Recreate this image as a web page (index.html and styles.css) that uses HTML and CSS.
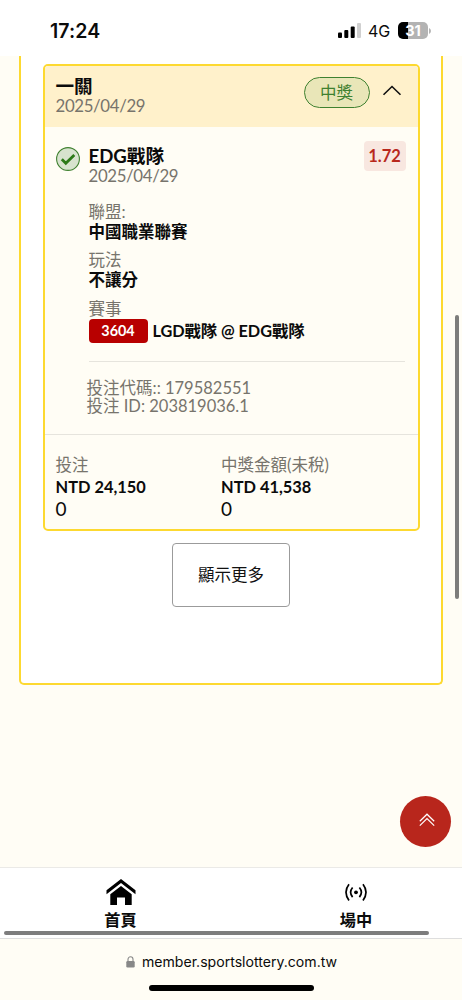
FILE: index.html
```html
<!DOCTYPE html>
<html lang="zh-Hant">
<head>
<meta charset="utf-8">
<title>投注紀錄</title>
<link rel="stylesheet" href="styles.css">
</head>
<body>
<div class="screen">
  <header class="status">
    <span class="clock">17:24</span>
    <div class="status-right">
      <svg class="signal" width="24" height="16" viewBox="0 0 24 16"><rect x="1" y="9.5" width="4" height="5.5" rx="1"/><rect x="7.3" y="7" width="4" height="8" rx="1"/><rect x="13.7" y="3.5" width="4" height="11.5" rx="1"/><rect x="20" y="0" width="4" height="15" rx="1" fill="#d0d0d0"/></svg>
      <span class="network">4G</span>
      <div class="battery"><span>31</span></div>
      <svg class="battery-cap" width="2" height="6" viewBox="0 0 2 6"><path d="M0 0Q2 1 2 3T0 6Z" fill="#b3b3b3"/></svg>
    </div>
  </header>
  <main class="main">
    <section class="panel">
      <article class="card">
        <div class="card-head">
          <div>
            <div class="line strong">一關</div>
            <div class="line date">2025/04/29</div>
          </div>
          <div class="head-right">
            <span class="won">中獎</span>
            <svg class="chevron" width="20" height="12" viewBox="0 0 20 12"><path d="M1.5 10.8L10 2.500l8.5 8.3" fill="none" stroke="#111" stroke-width="1.6"/></svg>
          </div>
        </div>
        <div class="card-body">
          <svg class="check" width="24" height="24" viewBox="0 0 24 24"><circle cx="12" cy="12" r="11.4" fill="#d7e3ce" stroke="#3f8130" stroke-width="1.1"/><path d="M5.8 12.3l4 4L18.3 8" fill="none" stroke="#2c7a18" stroke-width="2.8"/></svg>
          <div class="details">
            <div class="team-row">
              <div>
                <div class="line strong team">EDG戰隊</div>
                <div class="line date">2025/04/29</div>
              </div>
              <span class="odds">1.72</span>
            </div>
            <div class="field league"><div class="label">聯盟:</div><div class="value">中國職業聯賽</div></div>
            <div class="field play"><div class="label">玩法</div><div class="value">不讓分</div></div>
            <div class="field"><div class="label">賽事</div></div>
            <div class="match"><span class="code">3604</span><span class="value versus">LGD戰隊 @ EDG戰隊</span></div>
            <div class="ids"><div>投注代碼:: 179582551</div><div>投注 ID: 203819036.1</div></div>
          </div>
        </div>
        <div class="card-foot">
          <div><div class="foot-label">投注</div><div class="amount">NTD 24,150</div><div class="zero">0</div></div>
          <div><div class="foot-label">中獎金額(未稅)</div><div class="amount">NTD 41,538</div><div class="zero">0</div></div>
        </div>
      </article>
      <button class="more">顯示更多</button>
    </section>
    <div class="scroll-v"></div>
    <div class="to-top"><svg width="16" height="14" viewBox="0 0 16 14"><path d="M.8 8.3L8 1.2l7.2 7.1M.8 12.6L8 5.5l7.2 7.1" fill="none" stroke="#fff" stroke-width="1.2"/></svg></div>
  </main>
  <nav class="tabs">
    <div class="tab home">
      <svg width="30" height="28" viewBox="0 0 30 28"><path d="M.5 11.200L15 0l14.5 11.200v4L15 4 .5 15.200Z"/><path d="M4.3 15.200L15 7l10.700 8.200V26H19v-7.500h-8V26H4.300Z"/></svg>
      <span>首頁</span>
    </div>
    <div class="tab live">
      <svg width="24" height="28" viewBox="0 0 24 28"><g fill="none" stroke="#000" stroke-width="1.700"><path d="M5 5.300Q-1 13.200 5 21.500M19 5.300q6 7.900 0 16.200M8.600 8.500q-4 4.800 0 9.600M15.400 8.500q4 4.800 0 9.600"/></g><circle cx="12" cy="13.300" r="1.900"/></svg>
      <span>場中</span>
    </div>
    <div class="scroll-h"></div>
  </nav>
  <footer class="browser">
    <div class="address"><svg width="9" height="12" viewBox="0 0 9 12"><rect x=".3" y="5" width="8.400" height="6.500" rx="1.200" fill="#888"/><path d="M2 5.300V3.300a2.500 2.500 0 0 1 5 0v2" fill="none" stroke="#888" stroke-width="1.100"/></svg><span>member.sportslottery.com.tw</span></div>
    <div class="home-indicator"></div>
  </footer>
</div>
</body>
</html>
```

FILE: styles.css
```css
* { box-sizing: border-box; }
body { margin: 0; background: #fffdf5; color: #0b0b0b; font: 16.5px/20px Lato, "Noto Sans CJK TC", sans-serif; }
.screen { width: 462px; height: 1000px; display: flex; flex-direction: column; overflow: hidden; }
.status { height: 56px; background: #fff; display: flex; justify-content: space-between; padding: 21px 31px 0 50px; font-family: Inter, sans-serif; }
.clock { font-size: 19.5px; font-weight: 600; letter-spacing: .1px; }
.status-right { display: flex; align-items: flex-start; }
.signal { margin: 2px 7px 0 0; }
.network { font-size: 16px; width: 24px; }
.battery { margin: 1px 1px 0 6px; width: 30px; height: 17px; border-radius: 5px; background: linear-gradient(90deg, #000 32%, #b3b3b3 32%); color: #fff; font-size: 14.5px; font-weight: 700; line-height: 17px; text-align: center; }
.battery-cap { margin-top: 7px; }
.main { position: relative; height: 811px; padding: 0 19px; }
.panel { height: 629px; border: 2px solid #fdd930; border-top: 0; border-radius: 0 0 5px 5px; background: #fff; padding: 8px 22px 0; display: flex; flex-direction: column; align-items: center; }
.card { width: 377px; height: 467px; flex: none; border: 2px solid #fdd930; border-radius: 5px; background: #fffdf5; overflow: hidden; }
.card-head { height: 61px; background: #fff1cb; display: flex; justify-content: space-between; padding: 10px 16px 0 11px; }
.line { height: 20px; }
.strong { font-weight: 700; font-size: 18.6px; }
.date { color: #77746c; font-size: 16.8px; letter-spacing: -.33px; line-height: 19px; }
.head-right { display: flex; align-items: flex-start; }
.won { width: 66px; height: 31px; margin-top: 1px; border: 1px solid #3f8130; border-radius: 16px; background: #e9e6b8; color: #3f8130; font-size: 16.5px; line-height: 30px; text-align: center; }
.chevron { margin: 8px 0 0 12px; }
.card-body { height: 308px; border-bottom: 1px solid #e6e4dd; padding: 19px 12px 0 11px; display: flex; gap: 9px; }
.check { margin-top: 1px; flex: none; }
.details { flex: 1; }
.team-row { height: 56px; display: flex; justify-content: space-between; }
.odds { width: 42px; height: 30px; margin-top: -5px; border-radius: 4px; background: #f8e7e0; color: #b8281c; font-weight: 700; font-size: 16.5px; line-height: 30px; text-align: center; }
.label, .foot-label, .ids { color: #77746c; }
.value { font-weight: 700; }
.league { height: 48px; }
.play { height: 49px; }
.versus { font-size: 16.3px; letter-spacing: -.05px; }
.match { display: flex; align-items: center; gap: 5px; height: 43px; padding-bottom: 19px; width: 316px; border-bottom: 1px solid #e6e4dd; white-space: nowrap; }
.code { width: 59px; height: 24px; border-radius: 4px; background: #b80000; color: #fff; font-size: 14.4px; font-weight: 700; line-height: 24px; text-align: center; }
.ids { margin: 17px 0 0 -2px; font-size: 16.5px; line-height: 18px; }
.card-foot { display: grid; grid-template-columns: 165.5px 1fr; padding: 20px 0 0 11px; }
.foot-label { height: 21px; }
.amount { height: 22px; font-size: 16.4px; font-weight: 700; line-height: 22px; }
.zero { height: 22px; font-size: 19px; line-height: 22px; }
.more { width: 118px; height: 64px; margin-top: 12px; flex: none; border: 1px solid #9b9b9b; border-radius: 4px; background: #fff; color: #111; padding: 0; font: 16.5px/20px Lato, "Noto Sans CJK TC", sans-serif; }
.scroll-v { position: absolute; right: 3px; top: 259px; width: 4px; height: 284px; border-radius: 2px; background: #7d7d7b; }
.to-top { position: absolute; left: 400px; top: 740px; width: 51px; height: 51px; border-radius: 50%; background: #b8261c; display: flex; justify-content: center; padding: 17px 0 0 2px; }
.tabs { position: relative; height: 71px; border-top: 1px solid #ebeae7; background: #fff; display: flex; }
.tab { display: flex; flex-direction: column; align-items: center; width: 50%; padding-top: 11px; font-weight: 700; font-size: 16.2px; line-height: 20px; }
.tab span { margin-top: 3px; }
.home { padding-left: 10px; }
.live { padding-left: 19px; }
.scroll-h { position: absolute; left: 4px; top: 63px; width: 425px; height: 4px; border-radius: 2px; background: #7d7d7d; }
.browser { height: 62px; border-top: 1px solid #dedede; display: flex; flex-direction: column; align-items: center; }
.address { height: 46px; padding: 13px 0 0 1px; display: flex; align-items: flex-start; gap: 7px; font: 14.1px/20px Inter, sans-serif; }
.address svg { margin-top: 4px; }
.home-indicator { width: 165px; height: 6px; border-radius: 3px; background: #000; }
```
